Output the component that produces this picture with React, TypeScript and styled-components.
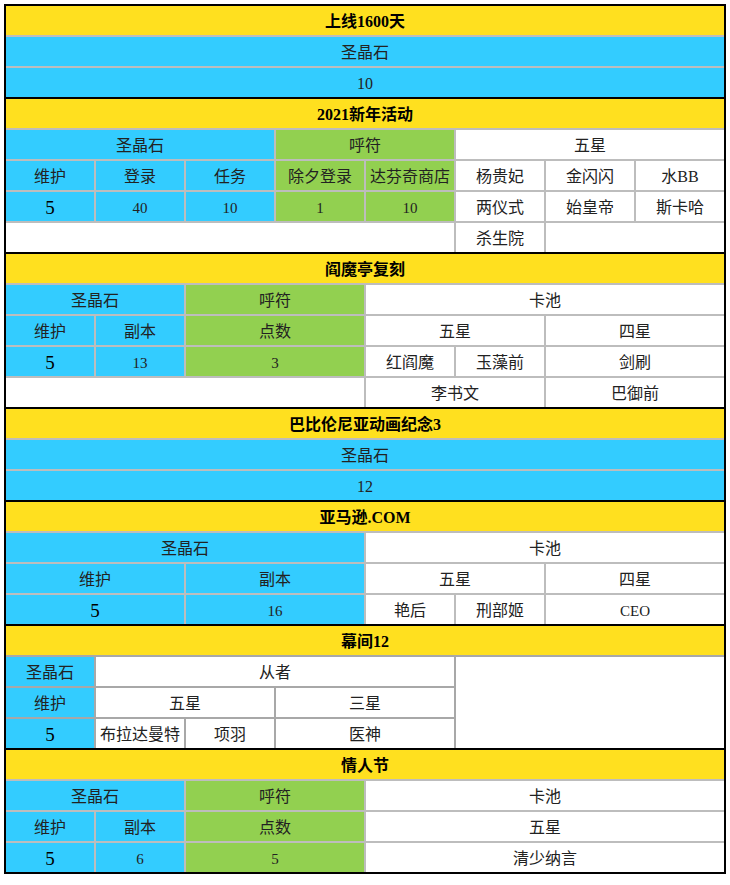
import React from 'react'
import styled, { createGlobalStyle } from 'styled-components'

const GlobalStyle = createGlobalStyle`
  html, body {
    margin: 0;
    padding: 0;
    background: #ffffff;
  }
`

type Fill = 'yellow' | 'blue' | 'green' | 'white'

const fills: Record<Fill, string> = {
  yellow: '#ffe01f',
  blue: '#33ccff',
  green: '#92d050',
  white: '#ffffff',
}

interface CellData {
  text?: string
  fill: Fill
  span?: number
  rows?: number
  kind?: 'title' | 'num' | 'big'
}

interface SectionData {
  line?: string
  cells: CellData[]
}

const sizes: Record<string, string> = {
  num: '15px',
  big: '19px',
  title: '16px',
}

const Sheet = styled.div`
  margin: 4px 0 0 4px;
  width: 722px;
  background: #000000;
  padding: 2px;
  box-sizing: border-box;
  display: flex;
  flex-direction: column;
  gap: 2px;
  font-family: "Liberation Serif", "Noto Sans CJK SC", serif;
  color: #222222;
`

const Section = styled.div<{ $line?: string }>`
  display: grid;
  grid-template-columns: repeat(8, 88px);
  grid-auto-rows: 29px;
  gap: 2px;
  background: ${p => p.$line || '#bdbdbd'};
`

const Cell = styled.div<{ $fill: Fill; $span: number; $rows: number; $kind?: string }>`
  grid-column: span ${p => p.$span};
  grid-row: span ${p => p.$rows};
  background: ${p => fills[p.$fill]};
  display: flex;
  align-items: center;
  justify-content: center;
  padding-top: ${p => (p.$kind === 'big' ? '1px' : '3px')};
  box-sizing: border-box;
  white-space: nowrap;
  font-size: ${p => (p.$kind ? sizes[p.$kind] : '16px')};
  font-weight: ${p => (p.$kind === 'title' ? 700 : 400)};
  color: ${p => (p.$kind === 'title' || p.$kind === 'big' ? '#000000' : '#222222')};
  line-height: 1;
`

const y = (text: string): CellData => ({ text, fill: 'yellow', span: 8, kind: 'title' })

const sections: SectionData[] = [
  {
    cells: [
      y('上线1600天'),
      { text: '圣晶石', fill: 'blue', span: 8 },
      { text: '10', fill: 'blue', span: 8 },
    ],
  },
  {
    cells: [
      y('2021新年活动'),
      { text: '圣晶石', fill: 'blue', span: 3 },
      { text: '呼符', fill: 'green', span: 2 },
      { text: '五星', fill: 'white', span: 3 },
      { text: '维护', fill: 'blue' },
      { text: '登录', fill: 'blue' },
      { text: '任务', fill: 'blue' },
      { text: '除夕登录', fill: 'green' },
      { text: '达芬奇商店', fill: 'green' },
      { text: '杨贵妃', fill: 'white' },
      { text: '金闪闪', fill: 'white' },
      { text: '水BB', fill: 'white' },
      { text: '5', fill: 'blue', kind: 'big' },
      { text: '40', fill: 'blue', kind: 'num' },
      { text: '10', fill: 'blue', kind: 'num' },
      { text: '1', fill: 'green', kind: 'num' },
      { text: '10', fill: 'green', kind: 'num' },
      { text: '两仪式', fill: 'white' },
      { text: '始皇帝', fill: 'white' },
      { text: '斯卡哈', fill: 'white' },
      { fill: 'white', span: 5 },
      { text: '杀生院', fill: 'white' },
      { fill: 'white', span: 2 },
    ],
  },
  {
    cells: [
      y('阎魔亭复刻'),
      { text: '圣晶石', fill: 'blue', span: 2 },
      { text: '呼符', fill: 'green', span: 2 },
      { text: '卡池', fill: 'white', span: 4 },
      { text: '维护', fill: 'blue' },
      { text: '副本', fill: 'blue' },
      { text: '点数', fill: 'green', span: 2 },
      { text: '五星', fill: 'white', span: 2 },
      { text: '四星', fill: 'white', span: 2 },
      { text: '5', fill: 'blue', kind: 'big' },
      { text: '13', fill: 'blue', kind: 'num' },
      { text: '3', fill: 'green', span: 2, kind: 'num' },
      { text: '红阎魔', fill: 'white' },
      { text: '玉藻前', fill: 'white' },
      { text: '剑刷', fill: 'white', span: 2 },
      { fill: 'white', span: 4 },
      { text: '李书文', fill: 'white', span: 2 },
      { text: '巴御前', fill: 'white', span: 2 },
    ],
  },
  {
    cells: [
      y('巴比伦尼亚动画纪念3'),
      { text: '圣晶石', fill: 'blue', span: 8 },
      { text: '12', fill: 'blue', span: 8 },
    ],
  },
  {
    cells: [
      y('亚马逊.COM'),
      { text: '圣晶石', fill: 'blue', span: 4 },
      { text: '卡池', fill: 'white', span: 4 },
      { text: '维护', fill: 'blue', span: 2 },
      { text: '副本', fill: 'blue', span: 2 },
      { text: '五星', fill: 'white', span: 2 },
      { text: '四星', fill: 'white', span: 2 },
      { text: '5', fill: 'blue', span: 2, kind: 'big' },
      { text: '16', fill: 'blue', span: 2, kind: 'num' },
      { text: '艳后', fill: 'white' },
      { text: '刑部姬', fill: 'white' },
      { text: 'CEO', fill: 'white', span: 2, kind: 'num' },
    ],
  },
  {
    line: '#a8a8a8',
    cells: [
      y('幕间12'),
      { text: '圣晶石', fill: 'blue' },
      { text: '从者', fill: 'white', span: 4 },
      { fill: 'white', span: 3, rows: 3 },
      { text: '维护', fill: 'blue' },
      { text: '五星', fill: 'white', span: 2 },
      { text: '三星', fill: 'white', span: 2 },
      { text: '5', fill: 'blue', kind: 'big' },
      { text: '布拉达曼特', fill: 'white' },
      { text: '项羽', fill: 'white' },
      { text: '医神', fill: 'white', span: 2 },
    ],
  },
  {
    cells: [
      y('情人节'),
      { text: '圣晶石', fill: 'blue', span: 2 },
      { text: '呼符', fill: 'green', span: 2 },
      { text: '卡池', fill: 'white', span: 4 },
      { text: '维护', fill: 'blue' },
      { text: '副本', fill: 'blue' },
      { text: '点数', fill: 'green', span: 2 },
      { text: '五星', fill: 'white', span: 4 },
      { text: '5', fill: 'blue', kind: 'big' },
      { text: '6', fill: 'blue', kind: 'num' },
      { text: '5', fill: 'green', span: 2, kind: 'num' },
      { text: '清少纳言', fill: 'white', span: 4 },
    ],
  },
]

const App: React.FC = () => {
  return (
    <>
      <GlobalStyle />
      <Sheet>
        {sections.map((section, i) => (
          <Section key={i} $line={section.line}>
            {section.cells.map((cell, j) => (
              <Cell
                key={j}
                $fill={cell.fill}
                $span={cell.span || 1}
                $rows={cell.rows || 1}
                $kind={cell.kind}
              >
                {cell.text}
              </Cell>
            ))}
          </Section>
        ))}
      </Sheet>
    </>
  )
}

export default App
